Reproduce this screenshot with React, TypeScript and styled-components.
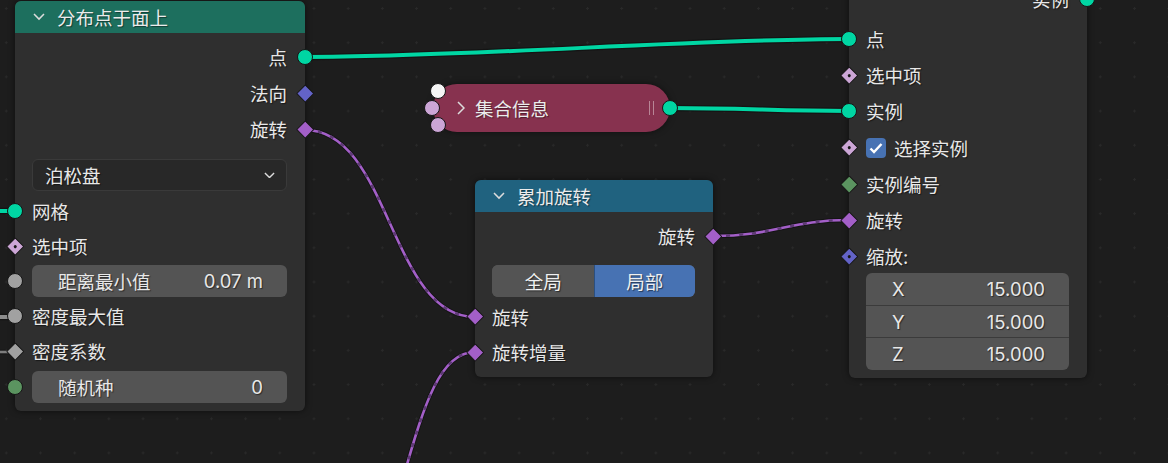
import React from 'react'
import styled, { createGlobalStyle } from 'styled-components'

const GlobalStyle = createGlobalStyle`
  html, body {
    margin: 0;
    padding: 0;
    background: #1d1d1d;
  }
  * {
    box-sizing: border-box;
  }
`

const C = {
  geometry: '#00d6a3',
  vector: '#6363c7',
  rotation: '#a35fc8',
  bool: '#cca6d6',
  float: '#a1a1a1',
  int: '#5b9460',
  collection: '#f5f5f5',
}

type Shape = 'circle' | 'diamond'

const Canvas = styled.div`
  position: relative;
  width: 1168px;
  height: 463px;
  overflow: hidden;
  background-color: #1d1d1d;
  background-image: radial-gradient(circle, #292929 1px, transparent 1.4px);
  background-size: 34.2px 34.2px;
  background-position: -10.8px -8.6px;
  font-family: 'Inter', 'Noto Sans CJK SC', sans-serif;
  font-size: 18.5px;
  color: #e8e8e8;
`

const Wires = styled.svg`
  position: absolute;
  left: 0;
  top: 0;
`

const Node = styled.div<{ $x: number; $y: number; $w: number }>`
  position: absolute;
  left: ${(p) => p.$x}px;
  top: ${(p) => p.$y}px;
  width: ${(p) => p.$w}px;
  background: #2f2f2f;
  border-radius: 6px;
  box-shadow: 0 0 6px rgba(0, 0, 0, 0.55);
`

const Header = styled.div<{ $color: string }>`
  height: 32px;
  display: flex;
  align-items: center;
  gap: 12px;
  padding-left: 18px;
  background: ${(p) => p.$color};
  border-radius: 6px 6px 0 0;
  color: #ececec;
  text-shadow: 1px 1px 1px rgba(0, 0, 0, 0.45);
`

const Body = styled.div<{ $bottom: number }>`
  padding: 6px 0 ${(p) => p.$bottom}px;
`

const Row = styled.div<{ $h: number; $out?: boolean }>`
  position: relative;
  height: ${(p) => p.$h}px;
  display: flex;
  align-items: center;
  justify-content: ${(p) => (p.$out ? 'flex-end' : 'flex-start')};
  gap: 8px;
  padding: 0 18px 0 17px;
  white-space: nowrap;
  text-shadow: 1px 1px 1px rgba(0, 0, 0, 0.5);
`

const Spacer = styled.div<{ $h: number }>`
  height: ${(p) => p.$h}px;
`

const Socket = styled.span<{ $shape: Shape; $color: string; $x: string; $y: string; $dot?: boolean }>`
  position: absolute;
  left: ${(p) => p.$x};
  top: ${(p) => p.$y};
  width: ${(p) => (p.$shape === 'circle' ? 16 : 12.5)}px;
  height: ${(p) => (p.$shape === 'circle' ? 16 : 12.5)}px;
  margin: ${(p) => (p.$shape === 'circle' ? -8 : -6.25)}px 0 0 ${(p) => (p.$shape === 'circle' ? -8 : -6.25)}px;
  background: ${(p) => p.$color};
  border: 1px solid #161616;
  border-radius: ${(p) => (p.$shape === 'circle' ? '50%' : '1px')};
  transform: ${(p) => (p.$shape === 'diamond' ? 'rotate(45deg)' : 'none')};
  z-index: 2;

  &::after {
    content: '';
    display: ${(p) => (p.$dot ? 'block' : 'none')};
    position: absolute;
    left: 50%;
    top: 50%;
    width: 3.5px;
    height: 3.5px;
    margin: -1.75px 0 0 -1.75px;
    background: #161616;
    border-radius: 50%;
  }
`

const Dropdown = styled.div`
  flex: 1;
  height: 32px;
  display: flex;
  align-items: center;
  justify-content: space-between;
  padding: 0 11px 0 12px;
  background: #282828;
  border: 1px solid #3a3a3a;
  border-radius: 6px;
`

const Field = styled.div`
  flex: 1;
  height: 32px;
  display: flex;
  align-items: center;
  justify-content: space-between;
  padding: 0 24px 0 26px;
  background: #545454;
  border-radius: 6px;
`

const Toggle = styled.div`
  flex: 1;
  height: 32px;
  display: flex;
  border-radius: 6px;
  overflow: hidden;
  background: #545454;
`

const ToggleOption = styled.div<{ $active?: boolean }>`
  flex: 1;
  display: flex;
  align-items: center;
  justify-content: center;
  background: ${(p) => (p.$active ? '#4772b3' : '#545454')};
  border-left: 1px solid ${(p) => (p.$active ? '#2b4f80' : 'transparent')};
  color: #f0f0f0;
`

const Checkbox = styled.span`
  width: 20px;
  height: 20px;
  display: inline-flex;
  align-items: center;
  justify-content: center;
  background: #4772b3;
  border-radius: 4px;
`

const VectorBox = styled.div`
  margin: -1.5px 18px 0 17px;
  background: #545454;
  border-radius: 6px;
  overflow: hidden;
`

const VectorRow = styled.div`
  height: 32.3px;
  display: flex;
  align-items: center;
  justify-content: space-between;
  padding: 0 24px 0 26px;
  border-top: 1px solid #3b3b3b;
  text-shadow: 1px 1px 1px rgba(0, 0, 0, 0.5);

  &:first-child {
    border-top: none;
  }
`

const Pill = styled.div`
  position: absolute;
  left: 433px;
  top: 84px;
  width: 237px;
  height: 48px;
  display: flex;
  align-items: center;
  gap: 10px;
  padding: 0 16px 0 24px;
  background: #87324f;
  border-radius: 24px;
  box-shadow: 0 0 6px rgba(0, 0, 0, 0.5);
  color: #ececec;
  text-shadow: 1px 1px 1px rgba(0, 0, 0, 0.45);
`

const Grip = styled.span`
  margin-left: auto;
  width: 5px;
  height: 14px;
  border-left: 1px solid #b88596;
  border-right: 1px solid #b88596;
`

const ChevronDown = ({ size = 12 }: { size?: number }) => (
  <svg width={size} height={size * 0.6} viewBox="0 0 12 7">
    <polyline points="1,1 6,6 11,1" fill="none" stroke="#dcdcdc" strokeWidth="1.5" />
  </svg>
)

const ChevronRight = () => (
  <svg width="8" height="14" viewBox="0 0 8 14">
    <polyline points="1,1 7,7 1,13" fill="none" stroke="#dcdcdc" strokeWidth="1.5" />
  </svg>
)

const Check = () => (
  <svg width="14" height="12" viewBox="0 0 14 12">
    <polyline points="1.5,6.5 5,10 12.5,2" fill="none" stroke="#ffffff" strokeWidth="2.4" />
  </svg>
)

const SocketAt = ({
  side,
  shape,
  color,
  dot,
}: {
  side: 'left' | 'right'
  shape: Shape
  color: string
  dot?: boolean
}) => <Socket $shape={shape} $color={color} $dot={dot} $x={side === 'left' ? '0px' : '100%'} $y="50%" />

const SolidWire = ({ d, color }: { d: string; color: string }) => (
  <>
    <path d={d} fill="none" stroke="#141414" strokeWidth={6.5} />
    <path d={d} fill="none" stroke={color} strokeWidth={4} />
  </>
)

const FieldWire = ({ d, color, dark }: { d: string; color: string; dark: string }) => (
  <>
    <path d={d} fill="none" stroke="#141414" strokeWidth={4.5} />
    <path d={d} fill="none" stroke={color} strokeWidth={2.6} />
    <path d={d} fill="none" stroke={dark} strokeWidth={2.6} strokeDasharray="4 9" />
  </>
)

export default function App() {
  return (
    <>
      <GlobalStyle />
      <Canvas>
        <Wires width={1168} height={463}>
          <SolidWire d="M305 57 C 470 57, 690 39, 849 39" color={C.geometry} />
          <SolidWire d="M670 108 C 745 108, 775 111, 849 111" color={C.geometry} />
          <SolidWire d="M-5 211 L 15 211" color={C.geometry} />
          <SolidWire d="M-5 317 L 15 317" color="#8c8c8c" />
          <FieldWire d="M-5 352 L 15 352" color="#7d7d7d" dark="#4a4a4a" />
          <FieldWire d="M305 130 C 390 130, 390 317, 475 317" color={C.rotation} dark="#5e3a75" />
          <FieldWire d="M713 236 C 775 236, 790 220, 849 220" color={C.rotation} dark="#5e3a75" />
          <FieldWire d="M475 352 C 440 352, 424 405, 404 475" color={C.rotation} dark="#5e3a75" />
        </Wires>

        <Node $x={15} $y={1} $w={290}>
          <Header $color="#1d6f5e">
            <ChevronDown />
            分布点于面上
          </Header>
          <Body $bottom={7}>
            <Row $h={36} $out>
              点
              <SocketAt side="right" shape="circle" color={C.geometry} />
            </Row>
            <Row $h={36} $out>
              法向
              <SocketAt side="right" shape="diamond" color={C.vector} />
            </Row>
            <Row $h={36} $out>
              旋转
              <SocketAt side="right" shape="diamond" color={C.rotation} />
            </Row>
            <Spacer $h={10} />
            <Row $h={36}>
              <Dropdown>
                泊松盘
                <ChevronDown size={11} />
              </Dropdown>
            </Row>
            <Row $h={35.2}>
              网格
              <SocketAt side="left" shape="circle" color={C.geometry} />
            </Row>
            <Row $h={35.2}>
              选中项
              <SocketAt side="left" shape="diamond" color={C.bool} dot />
            </Row>
            <Row $h={35.2}>
              <Field>
                <span>距离最小值</span>
                <span>0.07 m</span>
              </Field>
              <SocketAt side="left" shape="circle" color={C.float} />
            </Row>
            <Row $h={35.2}>
              密度最大值
              <SocketAt side="left" shape="circle" color={C.float} />
            </Row>
            <Row $h={35.2}>
              密度系数
              <SocketAt side="left" shape="diamond" color={C.float} />
            </Row>
            <Row $h={35.2}>
              <Field>
                <span>随机种</span>
                <span>0</span>
              </Field>
              <SocketAt side="left" shape="circle" color={C.int} />
            </Row>
          </Body>
        </Node>

        <Pill>
          <ChevronRight />
          <span>集合信息</span>
          <Grip />
          <Socket $shape="circle" $color={C.collection} $x="5px" $y="7px" />
          <Socket $shape="circle" $color={C.bool} $x="-1px" $y="24px" />
          <Socket $shape="circle" $color={C.bool} $x="5px" $y="41px" />
          <Socket $shape="circle" $color={C.geometry} $x="237px" $y="24px" />
        </Pill>

        <Node $x={475} $y={180} $w={238}>
          <Header $color="#20627f">
            <ChevronDown />
            累加旋转
          </Header>
          <Body $bottom={7.6}>
            <Row $h={36} $out>
              旋转
              <SocketAt side="right" shape="diamond" color={C.rotation} />
            </Row>
            <Spacer $h={9} />
            <Row $h={36}>
              <Toggle>
                <ToggleOption>全局</ToggleOption>
                <ToggleOption $active>局部</ToggleOption>
              </Toggle>
            </Row>
            <Row $h={35.2}>
              旋转
              <SocketAt side="left" shape="diamond" color={C.rotation} />
            </Row>
            <Row $h={35.2}>
              旋转增量
              <SocketAt side="left" shape="diamond" color={C.rotation} />
            </Row>
          </Body>
        </Node>

        <Node $x={849} $y={-25} $w={238}>
          <Body $bottom={8}>
            <Row $h={36} $out>
              实例
              <SocketAt side="right" shape="circle" color={C.geometry} />
            </Row>
            <Spacer $h={4} />
            <Row $h={36.2}>
              点
              <SocketAt side="left" shape="circle" color={C.geometry} />
            </Row>
            <Row $h={36.2}>
              选中项
              <SocketAt side="left" shape="diamond" color={C.bool} dot />
            </Row>
            <Row $h={36.2}>
              实例
              <SocketAt side="left" shape="circle" color={C.geometry} />
            </Row>
            <Row $h={36.2}>
              <Checkbox>
                <Check />
              </Checkbox>
              选择实例
              <SocketAt side="left" shape="diamond" color={C.bool} dot />
            </Row>
            <Row $h={36.2}>
              实例编号
              <SocketAt side="left" shape="diamond" color={C.int} />
            </Row>
            <Row $h={36.2}>
              旋转
              <SocketAt side="left" shape="diamond" color={C.rotation} />
            </Row>
            <Row $h={36.2}>
              缩放:
              <SocketAt side="left" shape="diamond" color={C.vector} dot />
            </Row>
            <VectorBox>
              <VectorRow>
                <span>X</span>
                <span>15.000</span>
              </VectorRow>
              <VectorRow>
                <span>Y</span>
                <span>15.000</span>
              </VectorRow>
              <VectorRow>
                <span>Z</span>
                <span>15.000</span>
              </VectorRow>
            </VectorBox>
          </Body>
        </Node>
      </Canvas>
    </>
  )
}
